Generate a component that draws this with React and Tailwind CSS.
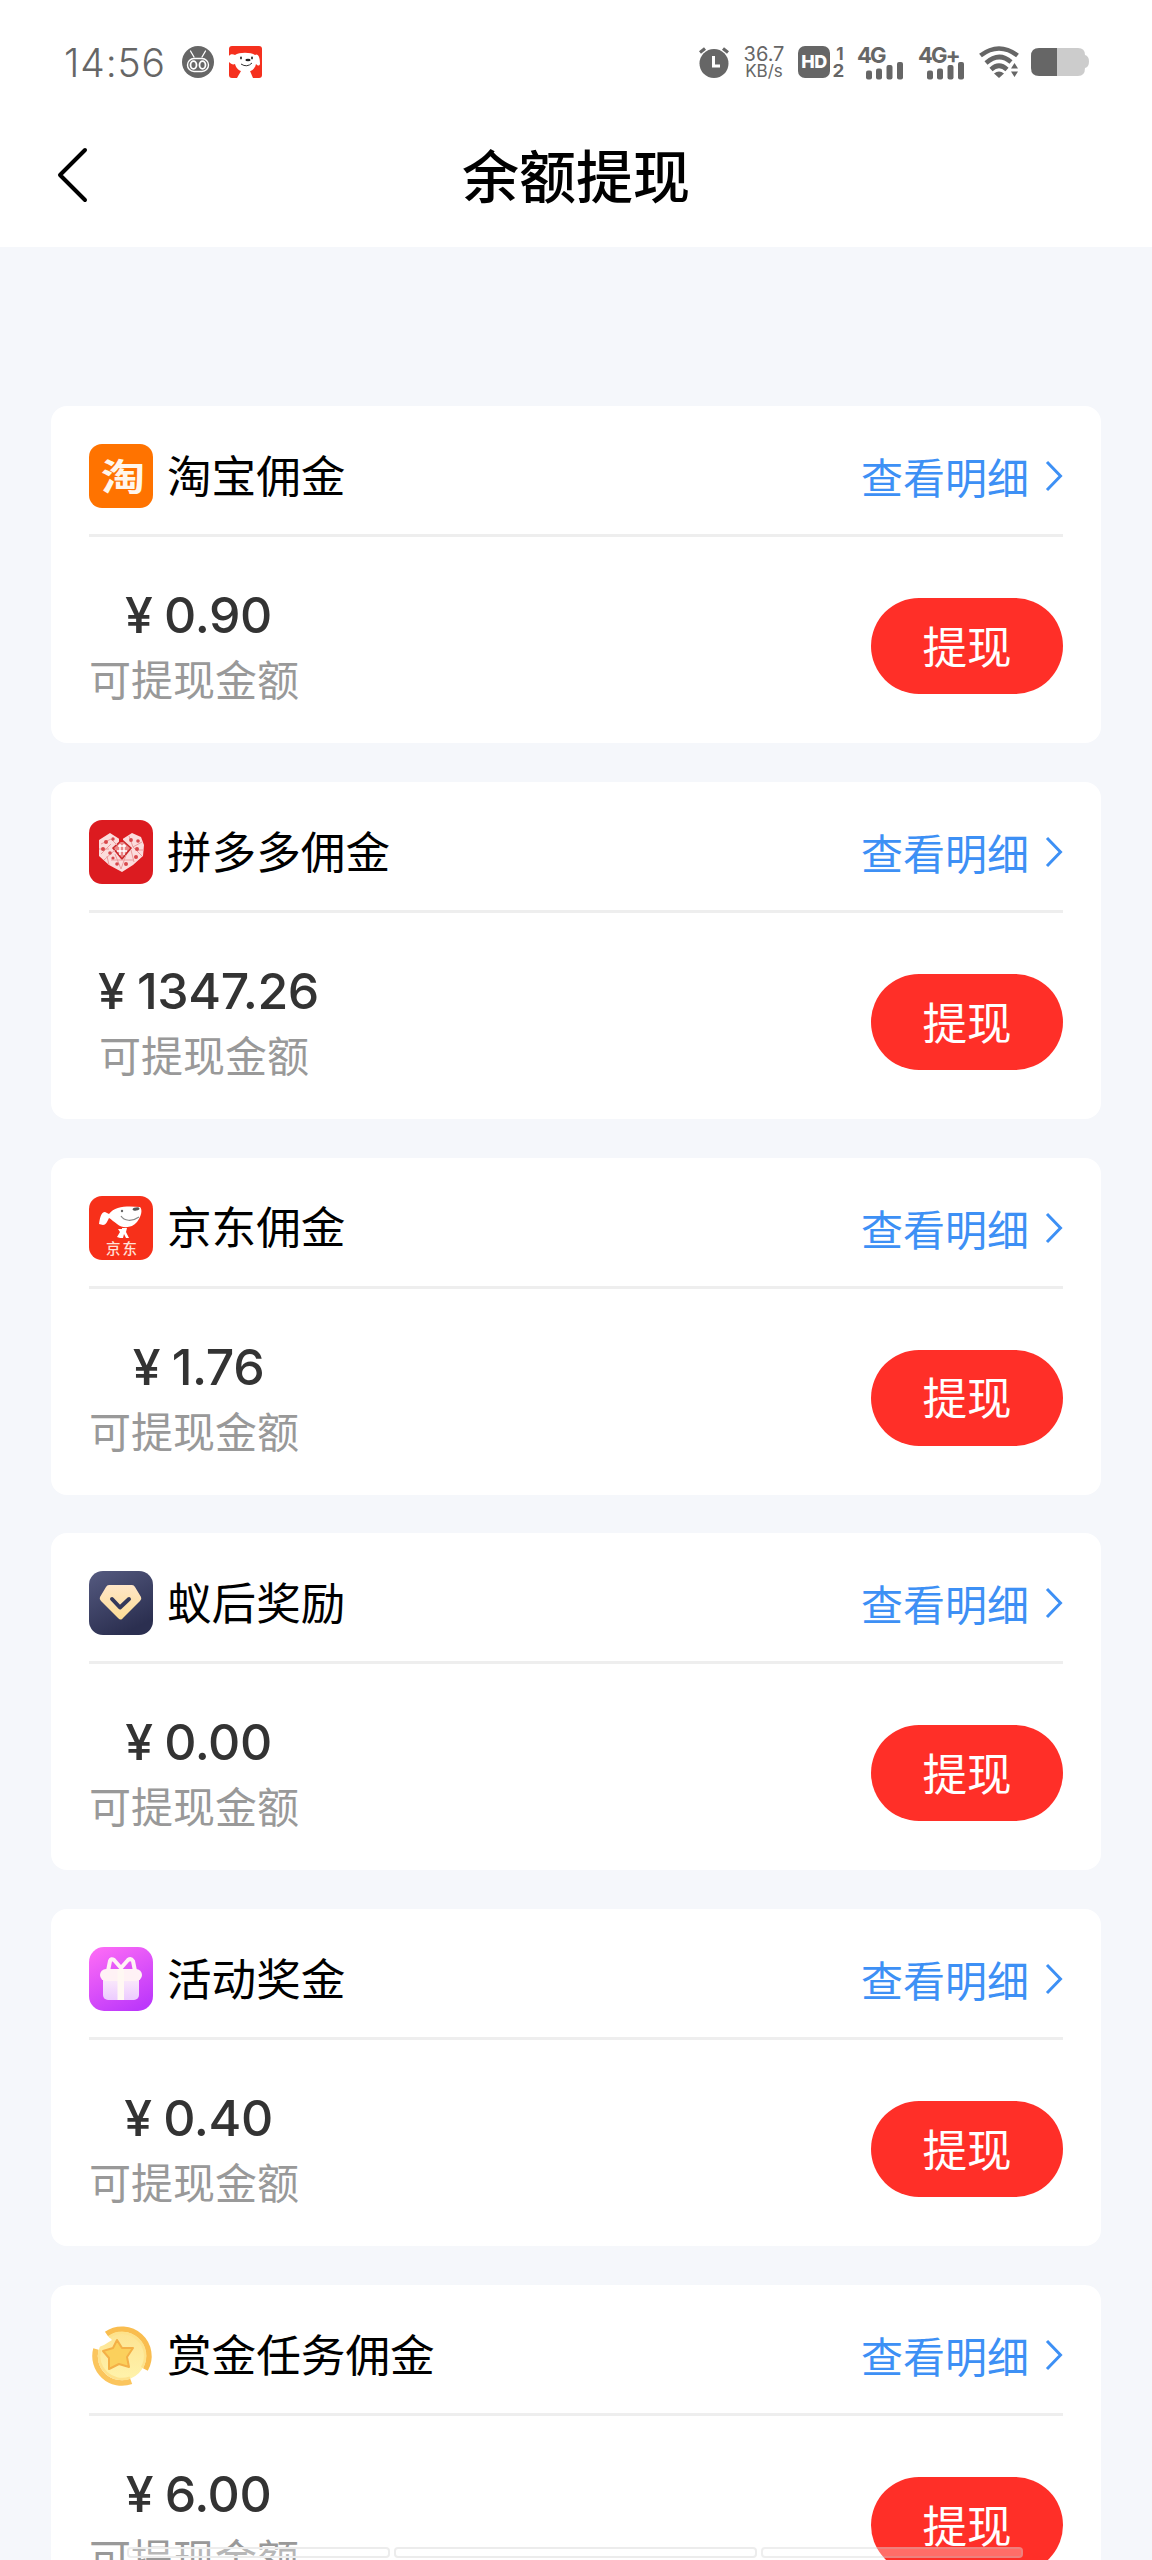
import { useId } from "react";

const accounts = [
  { icon: "taobao", name: "淘宝佣金", amount: "0.90" },
  { icon: "pdd", name: "拼多多佣金", amount: "1347.26" },
  { icon: "jd", name: "京东佣金", amount: "1.76" },
  { icon: "gem", name: "蚁后奖励", amount: "0.00" },
  { icon: "gift", name: "活动奖金", amount: "0.40" },
  { icon: "coin", name: "赏金任务佣金", amount: "6.00" },
];

function TaobaoIcon() {
  return (
    <div className="flex size-16 items-center justify-center rounded-[13px] bg-[#ff7300] pl-1 font-['Noto_Sans_CJK_SC',sans-serif] text-[44px] leading-none font-bold text-[#fff6ec]">
      <span className="-mt-0.5 scale-y-85">淘</span>
    </div>
  );
}

function PddIcon() {
  return (
    <svg className="size-16" viewBox="0 0 64 64">
      <rect width="64" height="64" rx="13" fill="#dc1b20" />
      <path d="M21 13 L32 20 L43 13 L52 17 L55 25 L54 36 L44 45 L33 52 L20 45 L10 36 L10 20 Z" fill="#fbdcdc" />
      <path d="M24 28 L33 20 L42 28 L33 39 Z" fill="#e98788" stroke="#c9282b" strokeWidth="1.5" />
      <path d="M29 26h8M28 31h10M31 24v11M35 24v11" stroke="#fff" strokeWidth="1.4" />
      <path d="M12 24l10-5 6 6M12 34l10-10M15 40l12-11M20 45l-2-9M40 16l4 11 9 9M44 27l9-5M42 30l3 12M26 34l6 15 5-14M22 40h22M10 29h10M48 30h7" fill="none" stroke="#eb9c9d" strokeWidth="1" />
      <path d="M32 13v9" stroke="#dc1b20" strokeWidth="4" />
      <g fill="#d8474b">
        <circle cx="17" cy="22" r="2" />
        <circle cx="24" cy="19" r="1.7" />
        <circle cx="14" cy="29" r="2" />
        <circle cx="21" cy="33" r="1.8" />
        <circle cx="42" cy="20" r="1.9" />
        <circle cx="49" cy="21" r="1.8" />
        <circle cx="48" cy="29" r="2" />
        <circle cx="47" cy="37" r="2" />
        <circle cx="28" cy="44" r="1.8" />
        <circle cx="37" cy="44" r="2" />
        <circle cx="24" cy="38" r="1.6" />
      </g>
    </svg>
  );
}

function JdIcon() {
  return (
    <svg className="size-16" viewBox="0 0 64 64">
      <rect width="64" height="64" rx="13" fill="#f7301a" />
      <path d="M10 28 C11 22 12 16 16 16 L20 18 C26 10 38 10 51 11 C54 14 52 21 48 26 C43 32 34 33 28 28 C25 26 22 23 20 22 C18 26 17 29 14 29 Z" fill="#fff" />
      <path d="M32 20 C35 25 43 26 50 21" fill="none" stroke="#888" strokeWidth="1.2" />
      <circle cx="33" cy="15" r="1.2" fill="#666" />
      <ellipse cx="47" cy="13" rx="3.5" ry="1.5" fill="#555" transform="rotate(-10 47 13)" />
      <path d="M33 32h5l-1 4 3 6h-3l-2-4-1 4h-3l-3-1 3-5-2-3h4Z" fill="#fff" />
      <text x="17" y="57.500" fontSize="14.500" fontWeight="500" fontFamily="'Noto Sans CJK SC', sans-serif" fill="#ffe0d8" textLength="31">京东</text>
    </svg>
  );
}

function GemIcon() {
  const id = useId();
  return (
    <svg className="size-16" viewBox="0 0 64 64">
      <defs>
        <linearGradient id={id + "bg"} x1="0" y1="0" x2="0.5" y2="1">
          <stop offset="0" stopColor="#555a80" />
          <stop offset="1" stopColor="#2b2f50" />
        </linearGradient>
        <linearGradient id={id + "gem"} x1="0" y1="0" x2="0" y2="1">
          <stop offset="0" stopColor="#ffe6c8" />
          <stop offset="1" stopColor="#fcdc94" />
        </linearGradient>
      </defs>
      <rect width="64" height="64" rx="14" fill={`url(#${id}bg)`} />
      <path d="M20 14h23q2 0 3 2l6 10q1 2-1 4L34 47q-2 3-5 0L12 30q-2-2-1-4l6-10q1-2 3-2Z" fill={`url(#${id}gem)`} />
      <path d="M23 28 L31 36.5 L40 28" fill="none" stroke="#34385a" strokeWidth="4" strokeLinecap="round" strokeLinejoin="round" />
    </svg>
  );
}

function GiftIcon() {
  const id = useId();
  return (
    <svg className="size-16" viewBox="0 0 64 64">
      <defs>
        <linearGradient id={id + "bg"} x1="0.2" y1="0" x2="0.7" y2="1">
          <stop offset="0" stopColor="#fb6af6" />
          <stop offset="1" stopColor="#bd38fb" />
        </linearGradient>
        <linearGradient id={id + "box"} x1="0" y1="0" x2="0" y2="1">
          <stop offset="0" stopColor="#fdeffa" />
          <stop offset="1" stopColor="#eccbff" />
        </linearGradient>
      </defs>
      <rect width="64" height="64" rx="15" fill={`url(#${id}bg)`} />
      <path d="M19 24 L21 14 Q22 11 25 13 L32 21 L39 13 Q42 11 44 14 L46 24" fill="none" stroke="#fff1f4" strokeWidth="4" strokeLinecap="round" strokeLinejoin="round" />
      <rect x="14" y="28" width="36" height="25" rx="5" fill={`url(#${id}box)`} />
      <rect x="11" y="22" width="42" height="12" rx="6" fill="#fff2f5" />
      <rect x="28.5" y="22" width="6.5" height="31" fill="#fff8f3" />
    </svg>
  );
}

function CoinIcon() {
  const id = useId();
  return (
    <svg className="size-16" viewBox="0 0 64 64">
      <defs>
        <linearGradient id={id + "coin"} x1="0" y1="0" x2="0" y2="1">
          <stop offset="0" stopColor="#fde391" />
          <stop offset="1" stopColor="#fff3ac" />
        </linearGradient>
      </defs>
      <circle cx="33" cy="33" r="24" fill={`url(#${id}coin)`} />
      <path d="M3 19 L14 8 L23 17 L15 22 L10 24 Z" fill="#fff" />
      <path d="M17.500 11 A27 27 0 0 1 56.400 46.500" fill="none" stroke="#f9bd4f" strokeWidth="5.5" />
      <path d="M20 14 A23 23 0 0 1 53 44.500" fill="none" stroke="#fde28a" strokeWidth="2.500" />
      <path d="M42.200 58.400 A27 27 0 0 1 6.900 26" fill="none" stroke="#fbc55d" strokeWidth="5.5" />
      <path d="M41 54.600 A23 23 0 0 1 10.800 27" fill="none" stroke="#fee28c" strokeWidth="2.5" />
      <path d="M28 17 L33 25 L44 25 L38 34 L40 44 L30 41 L20 46 L20 35 L14 28 L24 25 Z" fill="#fbd05c" stroke="#f4b047" strokeWidth="2" strokeLinejoin="round" />
    </svg>
  );
}

const icons = {
  taobao: TaobaoIcon,
  pdd: PddIcon,
  jd: JdIcon,
  gem: GemIcon,
  gift: GiftIcon,
  coin: CoinIcon,
};

// 信号格
function Signal({ label, className }) {
  return (
    <div className={className}>
      <span className="block pt-[2px] font-[Inter,sans-serif] text-[22px] leading-[18px] font-bold tracking-[-1.8px]">{label}</span>
      <svg className="-mt-[2px] ml-[9px] h-[18px] w-[37px]" viewBox="0 0 37 18" fill="#666">
        <rect x="0" y="8.5" width="6" height="9" rx="2" />
        <rect x="10" y="6.5" width="6" height="11" rx="2" />
        <rect x="20.5" y="3" width="6" height="14.5" rx="2" />
        <rect x="31" y="0" width="6" height="17.5" rx="2" />
      </svg>
    </div>
  );
}

function StatusBar() {
  return (
    <div className="flex h-[124px] items-center pl-16 pr-[63px] text-[#666]">
      <span className="w-[118px] font-[Inter,sans-serif] text-[39px] leading-none font-light tracking-[0.9px]">14:56</span>
      <svg className="size-8" viewBox="0 0 32 32">
        <circle cx="16" cy="16" r="16" fill="#666" />
        <path d="M8.5 5 L12 11 M23.5 5 L20 11" stroke="#fff" strokeWidth="1.3" strokeLinecap="round" />
        <rect x="5.5" y="12.5" width="21" height="13" rx="6.5" fill="none" stroke="#fff" strokeWidth="1.4" />
        <ellipse cx="11.5" cy="19" rx="3" ry="3.8" fill="none" stroke="#fff" strokeWidth="1.8" />
        <ellipse cx="20.5" cy="19" rx="3" ry="3.8" fill="none" stroke="#fff" strokeWidth="1.8" />
      </svg>
      <svg className="ml-[15px] h-8 w-[33px]" viewBox="0 0 33 32">
        <rect width="33" height="32" rx="3" fill="#f5301e" />
        <path d="M0 10 C1 8 4 8 6 9 C10 6 22 6 26 9 C29 7 31 11 31 18 C30 21 28 19 27 18 C26 23 22 26 17 26 C10 26 7 22 6 18 C4 19 2 18 0 16 Z" fill="#fff" />
        <path d="M12 25h9l3 7H8Z" fill="#fff" />
        <ellipse cx="12" cy="12" rx="1" ry="1.4" fill="#333" />
        <ellipse cx="23" cy="12" rx="1" ry="1.4" fill="#333" />
        <ellipse cx="19" cy="14" rx="2.6" ry="1.3" fill="#222" />
        <path d="M12 18q6 4 11-1" fill="none" stroke="#333" strokeWidth="1" />
      </svg>

      <svg className="ml-auto h-8 w-8" viewBox="0 0 32 32">
        <circle cx="16" cy="17.5" r="14.5" fill="#666" />
        <path d="M2 6.5 L7 2.5 M30 6.5 L25 2.5" stroke="#666" strokeWidth="3.2" />
        <path d="M15.5 10v10h6.5" fill="none" stroke="#fff" strokeWidth="3" />
      </svg>
      <div className="ml-[13px] flex w-[42px] flex-col items-center font-[Inter,sans-serif]">
        <span className="text-[20px] leading-[18px]">36.7</span>
        <span className="text-[17px] leading-[16px]">KB/s</span>
      </div>
      <div className="ml-[13px] flex h-8 gap-px font-[Inter,sans-serif]">
        <div className="flex w-8 items-center justify-center rounded-[7px] bg-[#666] text-[18px] leading-none font-extrabold tracking-[-0.5px] text-white">HD</div>
        <div className="flex w-[14px] flex-col items-center justify-between text-[17px] leading-[16px] font-bold">
          <span className="pl-1">1</span>
          <span className="-mb-px scale-x-110">2</span>
        </div>
      </div>
      <Signal label="4G" className="ml-[12px] h-[36px] w-12" />
      <Signal label="4G+" className="ml-[13px] h-[36px] w-12" />
      <svg className="ml-[13px] h-8 w-10" viewBox="0 0 40 32">
        <g fill="none" stroke="#666" strokeWidth="4.6">
          <path d="M1.5 9.5Q20-4.500 38.500 9.500" />
          <path d="M7 17Q20 5.500 32 16" />
          <path d="M12 23.500Q20 16 28 23.500" />
        </g>
        <path d="M15 27.500Q20 23.500 25 27.500L20 32Z" fill="#666" />
        <path d="M32 22.5L35.5 17L39 22.5Z M32 25.5L35.5 31L39 25.5Z" fill="#666" />
      </svg>
      <svg className="ml-3 h-[30px] w-[58px]" viewBox="0 0 58 30">
        <path d="M26 1H47Q54 1 54 8Q58 9 58 14.500Q58 20 54 21Q54 29 47 29H26Z" fill="#ccc" />
        <path d="M26 1H8Q0 1 0 9V21Q0 29 8 29H26Z" fill="#666" />
      </svg>
    </div>
  );
}

function AccountCard({ item }) {
  const Icon = icons[item.icon];
  return (
    <section className="h-[337px] shrink-0 rounded-[16px] bg-white px-[38px]">
      <div className="flex h-[131px] items-center border-b-3 border-[#eee] pt-3">
        <Icon />
        <h2 className="-mt-1 ml-[14px] text-[44.6px] leading-none text-black">{item.name}</h2>
        <a className="ml-auto flex items-center text-[42px] leading-none text-[#3d90f5]">
          <span>查看明细</span>
          <svg className="ml-4 h-8 w-[18px]" viewBox="0 0 18 32">
            <path d="M2 2 L15.5 16 L2 30" fill="none" stroke="currentColor" strokeWidth="3" />
          </svg>
        </a>
      </div>
      <div className="flex items-start justify-between">
        <div className="mt-[48px] flex flex-col items-center">
          <p className="flex items-center font-[Inter,sans-serif] text-[50px] leading-[60px] font-medium tracking-[-0.4px] text-[#333]">
            <span className="w-[48px] pl-[9px]">¥</span>
            {item.amount}
          </p>
          <p className="mt-[7px] text-[42px] leading-[52px] text-[#999]">可提现金额</p>
        </div>
        <button className="mt-[61px] h-24 w-48 rounded-full bg-[#ff2f28] pb-0.5 text-[44.6px] leading-none text-white">提现</button>
      </div>
    </section>
  );
}

export default function App() {
  return (
    <main className="relative h-[2560px] w-[1152px] overflow-hidden bg-[#f5f7fb] font-['Noto_Sans_CJK_SC',sans-serif]">
      <header className="h-[247px] bg-white">
        <StatusBar />
        <div className="grid h-[102px] grid-cols-[1fr_auto_1fr] items-center">
          <svg className="ml-14 h-[56px] w-8" viewBox="0 0 32 56" fill="none" stroke="#000" strokeWidth="4" strokeLinecap="round" strokeLinejoin="round">
            <path d="M29 3 L4 28 L29 53" />
          </svg>
          <h1 className="-mt-1 text-[57px] leading-none font-medium text-black">余额提现</h1>
        </div>
      </header>

      <div className="flex flex-col gap-[38.8px] px-[51px] pt-[159px]">
        {accounts.map((item) => (
          <AccountCard key={item.name} item={item} />
        ))}
      </div>

      {/* 底部手势条 */}
      <div className="absolute bottom-[2px] left-[127px] flex h-[11px] gap-1">
        <div className="w-[263px] rounded border-2 border-[#ececec] bg-white/30" />
        <div className="w-[363px] rounded border-2 border-[#ececec] bg-white/30" />
        <div className="w-[262px] rounded border-2 border-[#bbb]/25 bg-white/30" />
      </div>
    </main>
  );
}
